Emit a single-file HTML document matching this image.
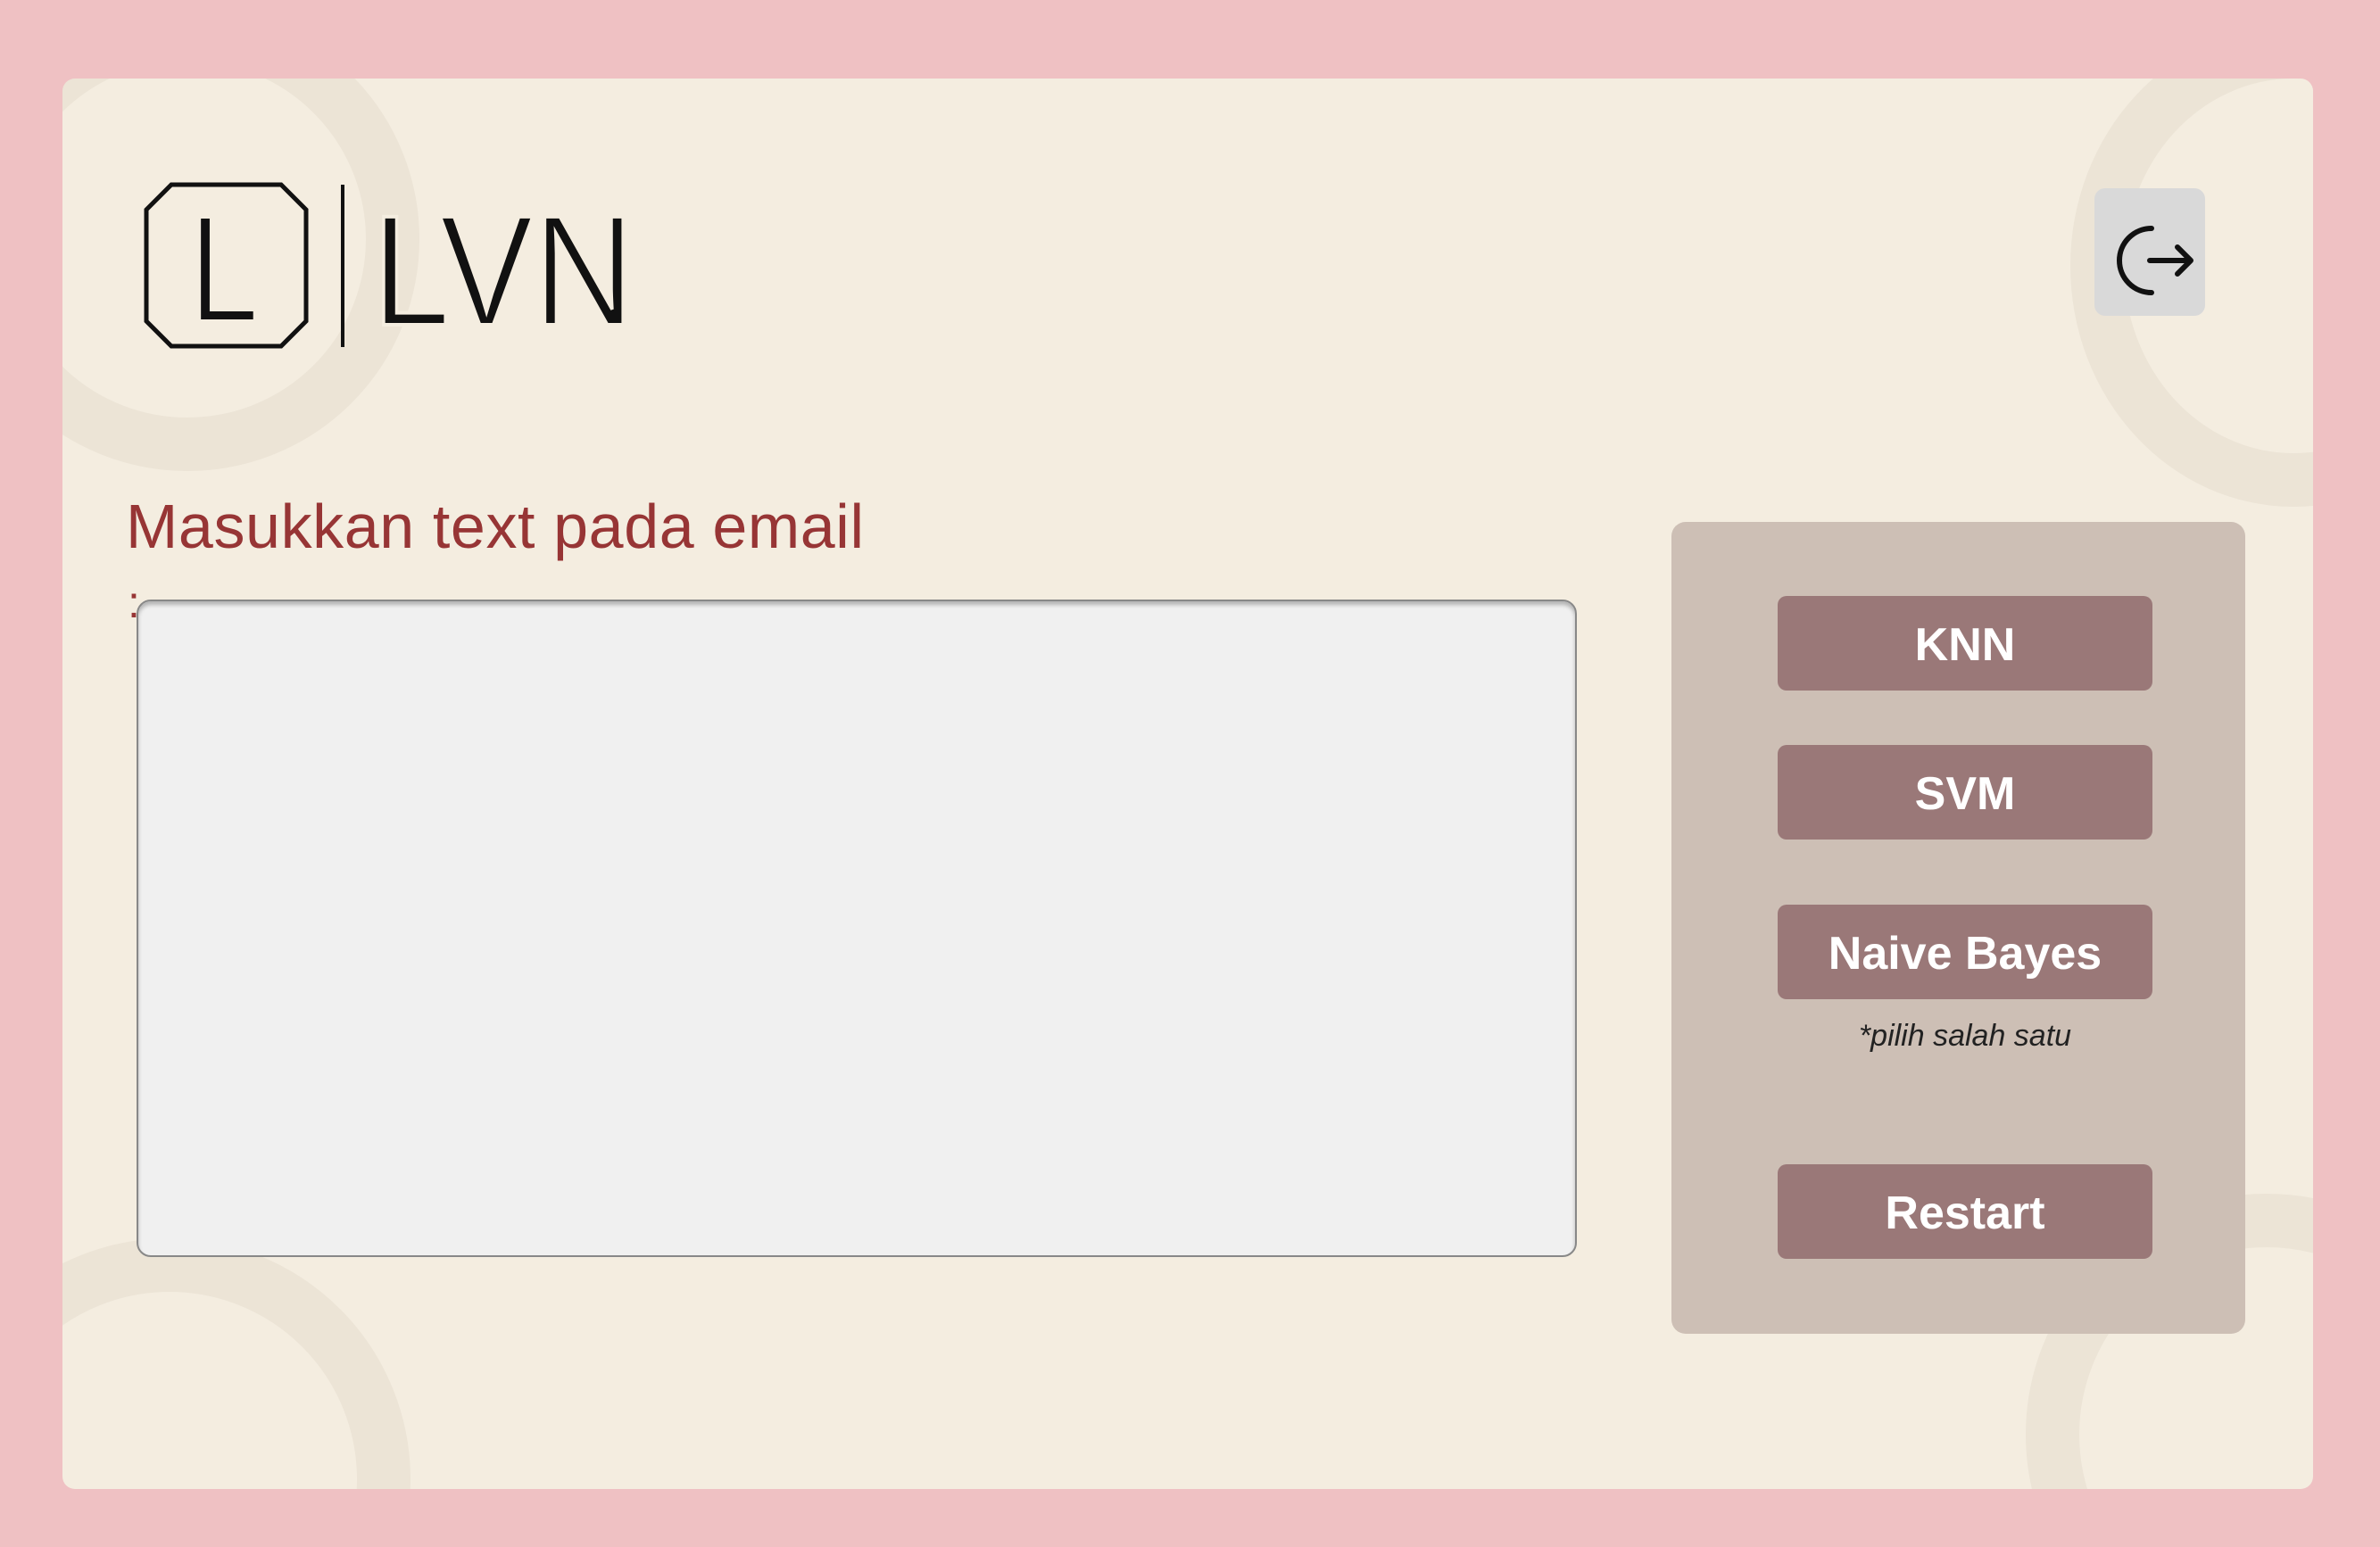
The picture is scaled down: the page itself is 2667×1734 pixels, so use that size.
<!DOCTYPE html>
<html><head><meta charset="utf-8"><style>
html,body{margin:0;padding:0}
body{width:2667px;height:1734px;background:#efc1c3;position:relative;overflow:hidden;font-family:"Liberation Sans",sans-serif}
.card{position:absolute;left:70px;top:88px;width:2522px;height:1581px;background:#f4ede0;border-radius:14px;overflow:hidden}
.orn{position:absolute;border-radius:50%;border:60px solid rgba(200,190,170,0.18)}
.h{position:absolute;left:141px;top:550px;font-size:70px;letter-spacing:0.6px;color:#973535;white-space:nowrap}
.colon{position:absolute;left:143px;top:646px;font-size:50px;color:#973535}
.ta{position:absolute;left:153px;top:672px;width:1610px;height:733px;background:#f0f0f0;border:2px solid #888;border-radius:16px;box-shadow:inset 0 4px 4px rgba(0,0,0,0.25)}
.panel{position:absolute;left:1873px;top:585px;width:643px;height:910px;background:#cdbfb5;border-radius:16px}
.btn{position:absolute;left:1992px;width:420px;height:106px;background:#9a7878;border-radius:10px;color:#fff;font-weight:bold;font-size:52px;text-align:center;line-height:110px}
.note{position:absolute;left:1992px;width:420px;top:1142px;text-align:center;font-size:34px;font-style:italic;color:#222}
.logout{position:absolute;left:2347px;top:211px;width:124px;height:143px;background:#d9d9d9;border-radius:12px}
</style></head><body>
<div class="card">
<div class="orn" style="left:-120px;top:-80px;width:400px;height:400px"></div>
<div class="orn" style="left:2250px;top:-60px;width:380px;height:420px"></div>
<div class="orn" style="left:-150px;top:1300px;width:420px;height:420px"></div>
<div class="orn" style="left:2200px;top:1250px;width:420px;height:420px"></div>
</div>
<svg style="position:absolute;left:0;top:0" width="800" height="420">
<polygon points="192,207 315,207 343,235 343,360 315,388 192,388 164,360 164,235" fill="none" stroke="#111" stroke-width="5"/>
<text x="212" y="360" font-family="Liberation Sans" font-size="170" fill="#111" stroke="#f4ede0" stroke-width="4" textLength="78" lengthAdjust="spacingAndGlyphs">L</text>
<rect x="382" y="207" width="4" height="182" fill="#111"/>
<text x="417" y="364" font-family="Liberation Sans" font-size="176" fill="#111" stroke="#f4ede0" stroke-width="4" textLength="294" lengthAdjust="spacingAndGlyphs">LVN</text>
</svg>
<div class="logout"><svg width="124" height="143" viewBox="0 0 124 143">
<path d="M64 45 A36 36 0 1 0 64 117" fill="none" stroke="#111" stroke-width="6" stroke-linecap="round"/>
<path d="M62 81 H108 M93 66 L108 81 L93 96" fill="none" stroke="#111" stroke-width="6" stroke-linecap="round" stroke-linejoin="round"/>
</svg></div>
<div class="h">Masukkan text pada email</div>
<div class="colon">:</div>
<div class="ta"></div>
<div class="panel"></div>
<div class="btn" style="top:668px">KNN</div>
<div class="btn" style="top:835px">SVM</div>
<div class="btn" style="top:1014px">Naive Bayes</div>
<div class="note">*pilih salah satu</div>
<div class="btn" style="top:1305px">Restart</div>
</body></html>
